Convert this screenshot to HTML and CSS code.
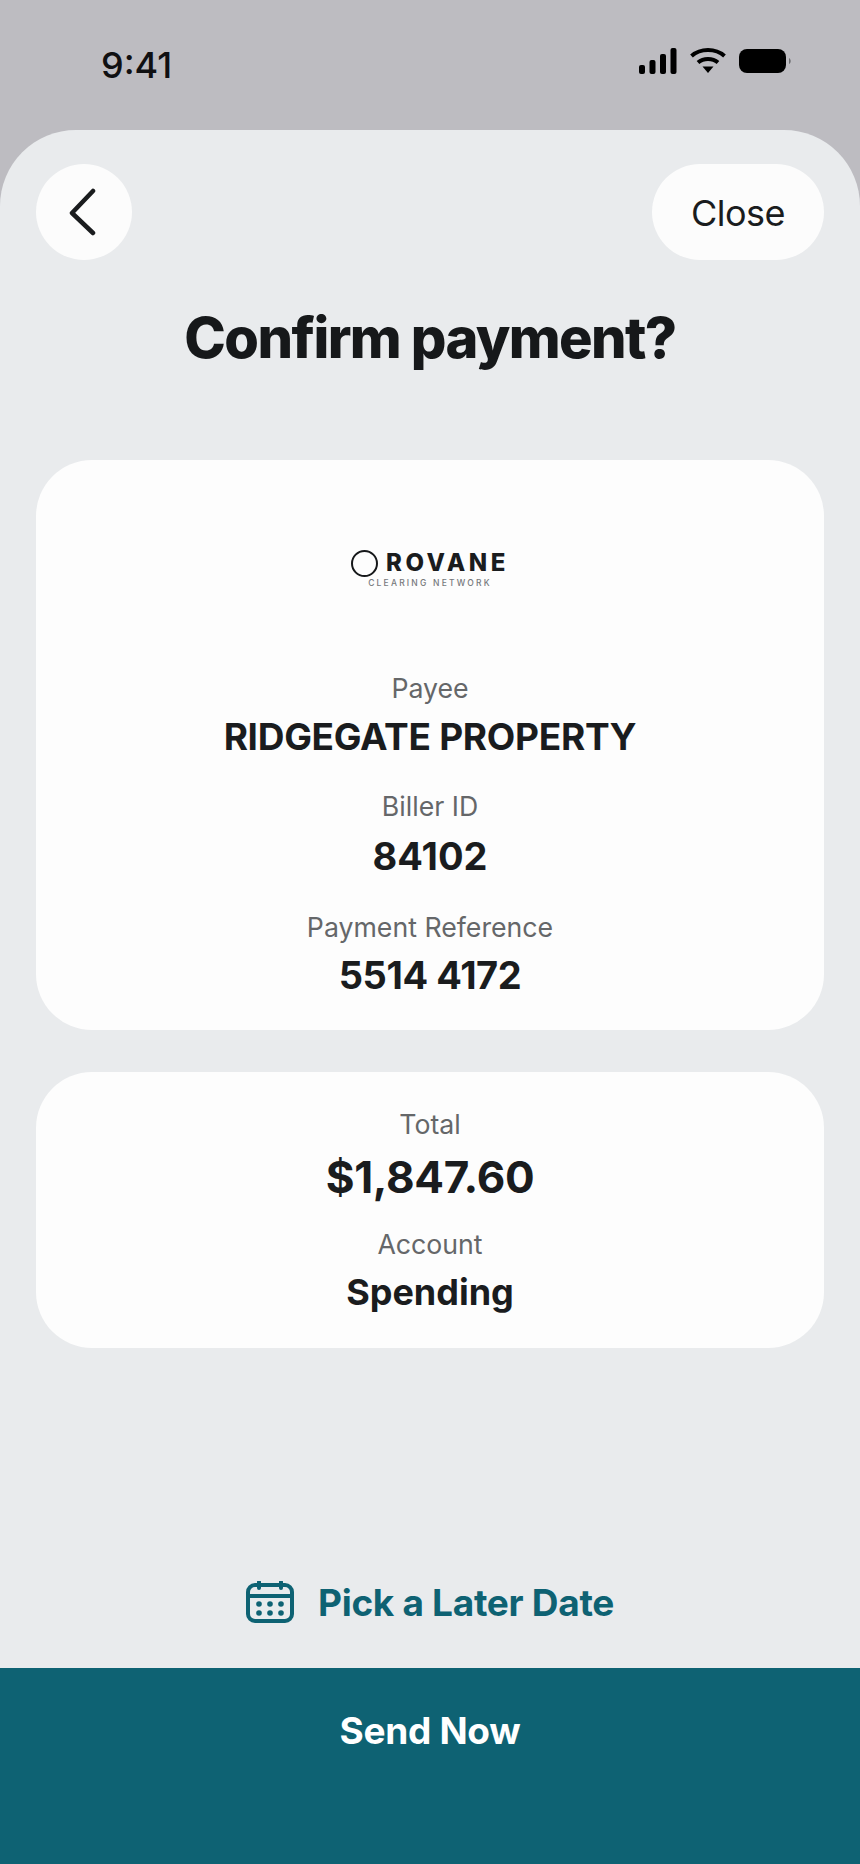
FILE: index.html
```html
<!DOCTYPE html>
<html lang="en">
<head>
    <meta charset="UTF-8">
    <meta name="viewport" content="width=device-width, initial-scale=1.0">
    <title>Confirm payment</title>
    <link rel="stylesheet" href="styles.css">
</head>
<body>
<header class="status-bar">
    <span class="status-time">9:41</span>
    <div class="status-icons">
        <svg width="38" height="26" viewBox="0 0 38 26">
            <rect x="0" y="17" width="6" height="9" rx="2"/>
            <rect x="10.500" y="12" width="6" height="14" rx="2"/>
            <rect x="21" y="6" width="6" height="20" rx="2"/>
            <rect x="31.500" y="0" width="6" height="26" rx="2"/>
        </svg>
        <svg class="wifi-icon" width="36" height="26" viewBox="0 0 36 26" fill="none" stroke="#000" stroke-width="4">
            <path d="M1.500 8C10.500 0 25.500 0 34.500 8"/>
            <path d="M8 14.500C13.500 9.700 22.500 9.700 28 14.500"/>
            <path d="M12.500 18.500L23.500 18.500L18 25Z" fill="#000" stroke="none"/>
        </svg>
        <svg width="53" height="26" viewBox="0 0 53 26">
            <rect x="0" y="1" width="47" height="24" rx="8"/>
            <path d="M50 10C52 11 52.500 15 50 16Z" fill="#6f6f72"/>
        </svg>
    </div>
</header>
<main class="sheet">
    <nav class="sheet-nav">
        <button class="round-btn back-btn" aria-label="Back">
            <svg width="30" height="48" viewBox="0 0 30 48" fill="none" stroke="#1a1c1e" stroke-width="4.500" stroke-linecap="round" stroke-linejoin="round">
                <path d="M26 3L5 25L26 45"/>
            </svg>
        </button>
        <button class="round-btn close-btn">Close</button>
    </nav>
    <h1 class="sheet-title">Confirm payment?</h1>

    <section class="card card-payee">
        <div class="logo">
            <div class="logo-top">
                <span class="logo-ring"></span>
                <span class="logo-name">ROVANE</span>
            </div>
            <span class="logo-sub">CLEARING NETWORK</span>
        </div>
        <p class="label label-payee">Payee</p>
        <p class="value value-payee">RIDGEGATE PROPERTY</p>
        <p class="label label-biller">Biller ID</p>
        <p class="value value-biller">84102</p>
        <p class="label label-ref">Payment Reference</p>
        <p class="value value-ref">5514 4172</p>
    </section>

    <section class="card card-total">
        <p class="label">Total</p>
        <p class="value value-total">$1,847.60</p>
        <p class="label label-account">Account</p>
        <p class="value value-account">Spending</p>
    </section>

    <button class="later-btn">
        <svg width="48" height="42" viewBox="0 0 48 42" fill="none" stroke="#0e6273" stroke-width="4">
            <rect x="2" y="4" width="44" height="36" rx="7"/>
            <path d="M2 15H46"/>
            <path d="M13 1V7M35 1V7" stroke-linecap="round"/>
            <g fill="#0e6273" stroke="none">
                <circle cx="13" cy="23" r="2.800"/>
                <circle cx="24" cy="23" r="2.800"/>
                <circle cx="35" cy="23" r="2.800"/>
                <circle cx="13" cy="32" r="2.800"/>
                <circle cx="24" cy="32" r="2.800"/>
                <circle cx="35" cy="32" r="2.800"/>
            </g>
        </svg>
        Pick a Later Date
    </button>
    <button class="send-btn">Send Now</button>
</main>
</body>
</html>
```
FILE: styles.css
```css
* {
    box-sizing: border-box;
}
body {
    margin: 0;
    padding: 0;
    height: 1864px;
    overflow: hidden;
    background-color: #bdbcc1;
    font-family: Inter, "Liberation Sans", sans-serif;
    color: #1a1c1e;
}
button {
    font-family: inherit;
    border: none;
    cursor: pointer;
}
p {
    margin: 0;
}
.status-bar {
    height: 130px;
    padding: 44px 68px 0 101px;
    display: flex;
    justify-content: space-between;
    align-items: flex-start;
}
.status-time {
    font-size: 36px;
    font-weight: 500;
    line-height: 42px;
    color: #101012;
}
.status-icons {
    display: flex;
    align-items: flex-start;
    gap: 13px;
    padding-top: 4px;
}
.sheet {
    height: 1734px;
    background-color: #e9ebed;
    border-radius: 76px 76px 0 0;
    padding-top: 34px;
    display: flex;
    flex-direction: column;
}
.sheet-nav {
    display: flex;
    justify-content: space-between;
    padding: 0 36px;
}
.round-btn {
    height: 96px;
    background-color: #fcfcfc;
    border-radius: 48px;
    display: flex;
    align-items: center;
    justify-content: center;
}
.back-btn {
    width: 96px;
    padding: 0 4px 0 0;
}
.close-btn {
    width: 172px;
    padding-top: 2px;
    font-size: 36px;
    letter-spacing: -0.5px;
    color: #1a1c1e;
}
.sheet-title {
    margin: 44px 0 0;
    font-size: 56px;
    font-weight: 800;
    line-height: 69px;
    letter-spacing: -1.6px;
    text-align: center;
    color: #16181a;
}
.card {
    margin: 0 36px;
    background-color: #fdfdfd;
    border-radius: 56px;
    text-align: center;
}
.card-payee {
    height: 570px;
    margin-top: 87px;
    padding-top: 89px;
}
.card-total {
    height: 276px;
    margin-top: 42px;
    padding-top: 36px;
}
.logo {
    display: flex;
    flex-direction: column;
    align-items: center;
    height: 89px;
}
.logo-top {
    display: flex;
    align-items: center;
    gap: 8px;
    height: 28px;
}
.logo-ring {
    width: 27px;
    height: 27px;
    border: 2px solid #16181a;
    border-radius: 50%;
}
.logo-name {
    font-size: 24px;
    font-weight: 800;
    letter-spacing: 3.600px;
    line-height: 28px;
}
.logo-sub {
    margin: 1px 0 0;
    font-size: 8.500px;
    font-weight: 500;
    letter-spacing: 2.200px;
    line-height: 10px;
    color: #77797c;
}
.label {
    font-size: 26.700px;
    line-height: 32px;
    color: #656769;
}
.value {
    font-weight: 700;
    color: #1a1c1e;
}
.label-payee {
    margin-top: 34px;
}
.value-payee {
    font-size: 37px;
    line-height: 44px;
    margin-top: 11px;
    letter-spacing: -0.3px;
}
.label-biller {
    margin-top: 31px;
}
.value-biller {
    font-size: 38px;
    line-height: 46px;
    margin-top: 11px;
}
.label-ref {
    margin-top: 32px;
}
.value-ref {
    font-size: 38px;
    line-height: 46px;
    margin-top: 9px;
    letter-spacing: -0.4px;
}
.value-total {
    font-size: 44px;
    line-height: 54px;
    margin-top: 10px;
    letter-spacing: -0.3px;
}
.label-account {
    margin-top: 24px;
}
.value-account {
    font-size: 36px;
    line-height: 44px;
    margin-top: 10px;
}
.later-btn {
    margin-top: auto;
    height: 68px;
    margin-bottom: 32px;
    background: none;
    display: flex;
    align-items: center;
    justify-content: center;
    gap: 24px;
    font-size: 37px;
    font-weight: 700;
    color: #0e6273;
    letter-spacing: -0.3px;
}
.send-btn {
    height: 196px;
    padding: 0 0 72px;
    background-color: #0e6273;
    color: #fff;
    font-size: 37px;
    font-weight: 700;
    letter-spacing: -0.3px;
}
```
